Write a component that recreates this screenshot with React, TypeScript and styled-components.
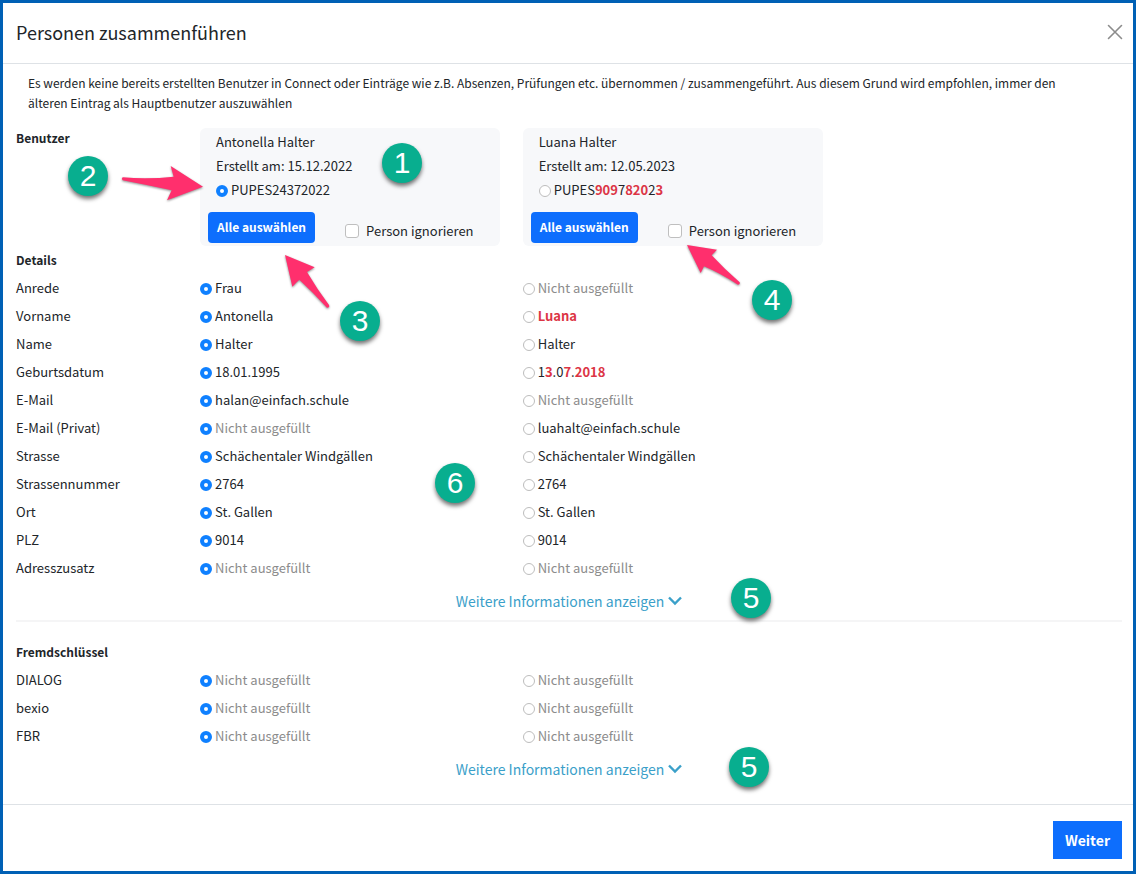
import React, { useState } from "react";
import styled, { createGlobalStyle } from "styled-components";

const GlobalStyle = createGlobalStyle`
  *, *::before, *::after { box-sizing: border-box; }
  html, body, #root { height: 100%; }
  body {
    margin: 0;
    background: #fff;
    color: #212529;
    font-family: "Noto Sans CJK SC", "Noto Sans", sans-serif;
    font-size: 13px;
    line-height: 20px;
  }
  button, input { font: inherit; margin: 0; }
`;

const Dialog = styled.div`
  position: relative;
  display: flex;
  flex-direction: column;
  min-height: 100%;
  border: 3px solid #0060b5;
  background: #fff;
`;

const Header = styled.header`
  display: flex;
  align-items: center;
  justify-content: space-between;
  padding: 14px 10px 16px 13px;
  border-bottom: 1px solid #dee2e6;
`;

const Title = styled.h1`
  margin: 0;
  font-size: 18px;
  font-weight: 400;
  line-height: 30px;
`;

const CloseButton = styled.button`
  display: flex;
  padding: 0;
  border: 0;
  background: none;
  color: #8c8c8c;
  cursor: pointer;
`;

const Body = styled.main`
  flex: 1;
  padding: 9px 11px 0 13px;
`;

const Notice = styled.p`
  margin: 0 0 15px;
  padding: 0 12px;
  font-size: 12px;
`;

const Row = styled.div`
  display: grid;
  grid-template-columns: 184px 7fr 13fr;
  line-height: 28px;
`;

const SectionTitle = styled.h2`
  margin: 0;
  font-size: 12px;
  font-weight: 700;
  line-height: 28px;
`;

const UserTitle = styled(SectionTitle)`
  line-height: 20px;
`;

const Card = styled.section`
  width: 100%;
  max-width: 300px;
  padding: 2px 8px 3px;
  border-radius: 6px;
  background: #f7f8fa;
  line-height: 24px;
`;

const CardLine = styled.div`
  padding: 0 8px;
`;

const CardActions = styled.div`
  display: flex;
  align-items: flex-end;
  gap: 30px;
  margin-top: 10px;
`;

const Choice = styled.label`
  display: flex;
  align-items: center;
  gap: 3px;
`;

const Radio = styled.input.attrs({ type: "radio" })`
  appearance: none;
  flex: none;
  width: 12px;
  height: 12px;
  margin-top: 2px;
  border: 1px solid #bdbdbd;
  border-radius: 50%;
  background: #fff;

  &:checked {
    border: 4px solid #0f80ff;
  }
`;

const Tick = styled.input.attrs({ type: "checkbox" })`
  appearance: none;
  flex: none;
  width: 14px;
  height: 14px;
  border: 1px solid #bfbfbf;
  border-radius: 3px;
  background: #fff;

  &:checked {
    background: #0d6efd;
  }
`;

const IgnoreLabel = styled.label`
  display: flex;
  align-items: center;
  gap: 7px;
`;

const Value = styled.span<{ $empty?: boolean }>`
  color: ${(p) => (p.$empty ? "#8c8c8c" : "inherit")};
`;

const Diff = styled.strong`
  color: #dc3545;
  font-weight: 700;
`;

const PrimaryButton = styled.button<{ $large?: boolean }>`
  padding: ${(p) => (p.$large ? "7px 12px" : "4px 9px 6px")};
  border: 0;
  border-radius: ${(p) => (p.$large ? "0" : "4px")};
  background: #0d6efd;
  color: #fff;
  font-size: ${(p) => (p.$large ? "14px" : "12px")};
  font-weight: 700;
  line-height: ${(p) => (p.$large ? "24px" : "21px")};
  cursor: pointer;
`;

const MoreRow = styled.div`
  display: flex;
  justify-content: center;
  height: 38px;
`;

const MoreLink = styled.a`
  display: flex;
  align-items: center;
  gap: 4px;
  color: #3ba0c9;
  font-size: 14px;
  text-decoration: none;
`;

const Divider = styled.hr`
  height: 2px;
  margin: 0 0 16px;
  border: 0;
  background: #f5f5f6;
`;

const Footer = styled.footer`
  display: flex;
  justify-content: flex-end;
  padding: 16px 11px 12px;
  border-top: 1px solid #dee2e6;
`;

const Badge = styled.span<{ $x: number; $y: number }>`
  position: absolute;
  left: ${(p) => p.$x}px;
  top: ${(p) => p.$y}px;
  display: grid;
  place-items: center;
  width: 40px;
  height: 40px;
  border-radius: 50%;
  background: #08ae8f;
  box-shadow: 0 3px 4px rgba(0, 0, 0, 0.55);
  color: #fff;
  font-family: "Liberation Sans", sans-serif;
  font-size: 30px;
  line-height: 40px;
  pointer-events: none;
`;

const Arrow = styled.svg<{ $x: number; $y: number }>`
  position: absolute;
  left: ${(p) => p.$x}px;
  top: ${(p) => p.$y}px;
  overflow: visible;
  fill: #ff2f6d;
  filter: drop-shadow(0 1px 1px rgba(0, 0, 0, 0.45));
  pointer-events: none;
`;

type Part = string | { diff: string };
type Field = { label: string; left: Part[]; right: Part[] };

const details: Field[] = [
  { label: "Anrede", left: ["Frau"], right: [] },
  { label: "Vorname", left: ["Antonella"], right: [{ diff: "Luana" }] },
  { label: "Name", left: ["Halter"], right: ["Halter"] },
  {
    label: "Geburtsdatum",
    left: ["18.01.1995"],
    right: ["1", { diff: "3" }, ".0", { diff: "7" }, ".", { diff: "2018" }],
  },
  { label: "E-Mail", left: ["halan@einfach.schule"], right: [] },
  { label: "E-Mail (Privat)", left: [], right: ["luahalt@einfach.schule"] },
  { label: "Strasse", left: ["Schächentaler Windgällen"], right: ["Schächentaler Windgällen"] },
  { label: "Strassennummer", left: ["2764"], right: ["2764"] },
  { label: "Ort", left: ["St. Gallen"], right: ["St. Gallen"] },
  { label: "PLZ", left: ["9014"], right: ["9014"] },
  { label: "Adresszusatz", left: [], right: [] },
];

const foreignKeys: Field[] = ["DIALOG", "bexio", "FBR"].map((label) => ({
  label,
  left: [],
  right: [],
}));

const users = [
  { name: "Antonella Halter", created: "15.12.2022", id: ["PUPES24372022"] as Part[] },
  {
    name: "Luana Halter",
    created: "12.05.2023",
    id: ["PUPES", { diff: "909" }, "7", { diff: "820" }, "2", { diff: "3" }] as Part[],
  },
];

const badges = [
  { n: 1, x: 379, y: 140 },
  { n: 2, x: 65, y: 153 },
  { n: 3, x: 337, y: 298 },
  { n: 4, x: 749, y: 277 },
  { n: 5, x: 728, y: 575 },
  { n: 5, x: 726, y: 744 },
  { n: 6, x: 432, y: 460 },
];

function Parts({ parts }: { parts: Part[] }) {
  if (parts.length === 0) return <Value $empty>Nicht ausgefüllt</Value>;
  return (
    <Value>
      {parts.map((p, i) => (typeof p === "string" ? p : <Diff key={i}>{p.diff}</Diff>))}
    </Value>
  );
}

function FieldRow({ field, picked, onPick }: { field: Field; picked: number; onPick: (i: number) => void }) {
  return (
    <Row role="radiogroup" aria-label={field.label}>
      <span>{field.label}</span>
      {[field.left, field.right].map((parts, i) => (
        <Choice key={i}>
          <Radio name={field.label} checked={picked === i} onChange={() => onPick(i)} />
          <Parts parts={parts} />
        </Choice>
      ))}
    </Row>
  );
}

function More() {
  return (
    <MoreRow>
      <MoreLink href="#mehr">
        Weitere Informationen anzeigen
        <svg width="14" height="10" viewBox="0 0 14 10" fill="none" stroke="currentColor" strokeWidth="2.4">
          <path d="M1 1.5l6 6 6-6" />
        </svg>
      </MoreLink>
    </MoreRow>
  );
}

export default function App() {
  const [main, setMain] = useState(0);
  const [picks, setPicks] = useState<Record<string, number>>({});
  const pick = (label: string, i: number) => setPicks((p) => ({ ...p, [label]: i }));
  const pickAll = (i: number) => {
    setMain(i);
    setPicks(Object.fromEntries([...details, ...foreignKeys].map((f) => [f.label, i])));
  };
  const rows = (fields: Field[]) =>
    fields.map((f) => (
      <FieldRow key={f.label} field={f} picked={picks[f.label] ?? 0} onPick={(i) => pick(f.label, i)} />
    ));

  return (
    <>
      <GlobalStyle />
      <Dialog role="dialog" aria-labelledby="titel">
        <Header>
          <Title id="titel">Personen zusammenführen</Title>
          <CloseButton type="button" aria-label="Schliessen">
            <svg width="16" height="16" viewBox="0 0 16 16" stroke="currentColor" strokeWidth="1.6" strokeLinecap="round">
              <path d="M1.5 1.5l13 13M14.5 1.5l-13 13" />
            </svg>
          </CloseButton>
        </Header>
        <Body>
          <Notice>
            Es werden keine bereits erstellten Benutzer in Connect oder Einträge wie z.B. Absenzen, Prüfungen etc.
            übernommen / zusammengeführt. Aus diesem Grund wird empfohlen, immer den
            <br />
            älteren Eintrag als Hauptbenutzer auszuwählen
          </Notice>
          <Row>
            <UserTitle>Benutzer</UserTitle>
            {users.map((u, i) => (
              <Card key={u.name}>
                <CardLine>{u.name}</CardLine>
                <CardLine>Erstellt am: {u.created}</CardLine>
                <CardLine>
                  <Choice>
                    <Radio name="benutzer" checked={main === i} onChange={() => setMain(i)} />
                    <Parts parts={u.id} />
                  </Choice>
                </CardLine>
                <CardActions>
                  <PrimaryButton type="button" onClick={() => pickAll(i)}>
                    Alle auswählen
                  </PrimaryButton>
                  <IgnoreLabel>
                    <Tick />
                    Person ignorieren
                  </IgnoreLabel>
                </CardActions>
              </Card>
            ))}
          </Row>
          <SectionTitle>Details</SectionTitle>
          {rows(details)}
          <More />
          <Divider />
          <SectionTitle>Fremdschlüssel</SectionTitle>
          {rows(foreignKeys)}
          <More />
        </Body>
        <Footer>
          <PrimaryButton type="button" $large>
            Weiter
          </PrimaryButton>
        </Footer>
        {badges.map((b) => (
          <Badge key={`${b.n}-${b.y}`} $x={b.x} $y={b.y}>
            {b.n}
          </Badge>
        ))}
        <Arrow $x={119} $y={163} width="81" height="35" viewBox="0 0 243 105" aria-hidden>
          <path d="M2 34Q80 40 155 32L146 0L243 62L135 103L149 73Q80 58 2 43Q-3 38 2 34Z" />
        </Arrow>
        <Arrow $x={282} $y={252} width="45" height="53" viewBox="0 0 135 159" aria-hidden>
          <path d="M0 0L89 37L66 51Q96 102 132 150Q135 158 126 158Q84 112 43 74Q36 80 22 95Z" />
        </Arrow>
        <Arrow $x={684} $y={242} width="53" height="41" viewBox="0 0 159 123" aria-hidden>
          <path d="M0 0L90 14L74 31Q114 74 158 112Q160 119 153 119Q98 84 51 64L41 84Z" />
        </Arrow>
      </Dialog>
    </>
  );
}
